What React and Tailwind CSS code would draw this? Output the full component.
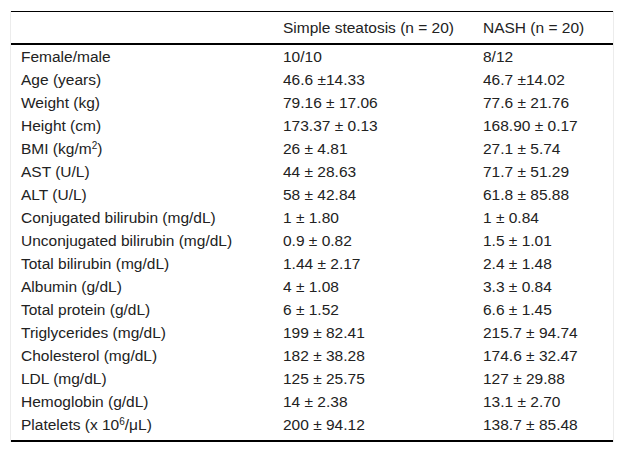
import React from "react";

const rows = [
  ["Female/male", "10/10", "8/12"],
  ["Age (years)", "46.6 ±14.33", "46.7 ±14.02"],
  ["Weight (kg)", "79.16 ± 17.06", "77.6 ± 21.76"],
  ["Height (cm)", "173.37 ± 0.13", "168.90 ± 0.17"],
  ["BMI", "26 ± 4.81", "27.1 ± 5.74"],
  ["AST (U/L)", "44 ± 28.63", "71.7 ± 51.29"],
  ["ALT (U/L)", "58 ± 42.84", "61.8 ± 85.88"],
  ["Conjugated bilirubin (mg/dL)", "1 ± 1.80", "1 ± 0.84"],
  ["Unconjugated bilirubin (mg/dL)", "0.9 ± 0.82", "1.5 ± 1.01"],
  ["Total bilirubin (mg/dL)", "1.44 ± 2.17", "2.4 ± 1.48"],
  ["Albumin (g/dL)", "4 ± 1.08", "3.3 ± 0.84"],
  ["Total protein (g/dL)", "6 ± 1.52", "6.6 ± 1.45"],
  ["Triglycerides (mg/dL)", "199 ± 82.41", "215.7 ± 94.74"],
  ["Cholesterol (mg/dL)", "182 ± 38.28", "174.6 ± 32.47"],
  ["LDL (mg/dL)", "125 ± 25.75", "127 ± 29.88"],
  ["Hemoglobin (g/dL)", "14 ± 2.38", "13.1 ± 2.70"],
  ["Platelets", "200 ± 94.12", "138.7 ± 85.48"],
];

function Label({ text }) {
  if (text === "BMI")
    return (
      <span>
        BMI (kg/m<sup className="text-[10px]">2</sup>)
      </span>
    );
  if (text === "Platelets")
    return (
      <span>
        Platelets (x 10<sup className="text-[10px]">6</sup>/μL)
      </span>
    );
  return <span>{text}</span>;
}

export default function App() {
  return (
    <div className="w-[625px] h-[453px] bg-white pt-[11px] pl-[10px]" style={{ fontFamily: '"Liberation Sans", Arial, sans-serif' }}>
      <div className="w-[604px] border-x border-[#ececec] text-[15.5px] text-[#222]">
        <div className="border-t border-black border-b-2 grid grid-cols-[262px_200px_1fr] pl-[10px] h-[34px] items-center leading-none">
          <span></span>
          <span>Simple steatosis (n = 20)</span>
          <span>NASH (n = 20)</span>
        </div>
        <div className="border-b-2 border-black pb-[4px]">
          {rows.map((r) => (
            <div key={r[0]} className="grid grid-cols-[262px_200px_1fr] pl-[10px] h-[23px] items-center leading-none">
              <Label text={r[0]} />
              <span>{r[1]}</span>
              <span>{r[2]}</span>
            </div>
          ))}
        </div>
      </div>
    </div>
  );
}
